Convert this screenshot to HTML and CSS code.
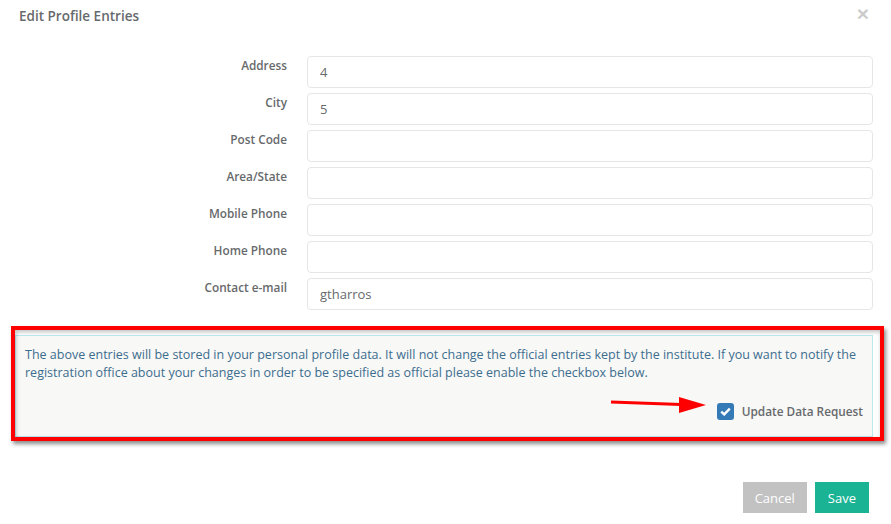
FILE: index.html
```html
<!DOCTYPE html>
<html lang="en">
<head>
    <meta charset="UTF-8">
    <title>Edit Profile Entries</title>
    <link rel="stylesheet" href="styles.css">
</head>
<body>
<div class="modal">
    <div class="modal-header">
        <h4 class="modal-title">Edit Profile Entries</h4>
        <button type="button" class="close">&times;</button>
    </div>
    <div class="modal-body">
        <form class="form-grid">
            <label>Address</label>
            <input type="text" class="form-control" value="4">
            <label>City</label>
            <input type="text" class="form-control" value="5">
            <label>Post Code</label>
            <input type="text" class="form-control" value="">
            <label>Area/State</label>
            <input type="text" class="form-control" value="">
            <label>Mobile Phone</label>
            <input type="text" class="form-control" value="">
            <label>Home Phone</label>
            <input type="text" class="form-control" value="">
            <label>Contact e-mail</label>
            <input type="text" class="form-control" value="gtharros">
        </form>

        <div class="notice-wrap">
            <div class="notice">
                <p>The above entries will be stored in your personal profile data. It will not change the official entries kept by the institute. If you want to notify the registration office about your changes in order to be specified as official please enable the checkbox below.</p>
                <div class="check-row">
                    <span class="check-box">
                        <svg width="11" height="9" viewBox="0 0 11 9"><path d="M1.2 4.6 L4.2 7.4 L9.8 1.6" fill="none" stroke="#fff" stroke-width="2.4"/></svg>
                    </span>
                    <span class="check-label">Update Data Request</span>
                </div>
            </div>
            <!-- annotation -->
            <div class="red-frame"></div>
            <svg class="red-arrow" width="100" height="20" viewBox="0 0 100 20">
                <path d="M2 7 L72 9.5" stroke="#f00" stroke-width="3" fill="none"/>
                <polygon points="70,2 97,10 70,18" fill="#f00"/>
            </svg>
        </div>
    </div>
    <div class="modal-footer">
        <button type="button" class="btn btn-cancel">Cancel</button>
        <button type="button" class="btn btn-save">Save</button>
    </div>
</div>
</body>
</html>
```

FILE: styles.css
```css
*{
    margin: 0;
    padding: 0;
    box-sizing: border-box;
}
body{
    font-family: "Open Sans", "Liberation Sans", sans-serif;
    font-size: 13px;
    color: #676a6c;
    background: #fff;
}
.modal{
    width: 891px;
}
.modal-header{
    display: flex;
    justify-content: space-between;
    align-items: flex-start;
    height: 36px;
    padding: 6px 22px 0 19px;
}
.modal-title{
    font-size: 13.5px;
    font-weight: 600;
    line-height: 21px;
    color: #676a6c;
}
.close{
    border: 0;
    background: none;
    font-family: "Liberation Sans", sans-serif;
    font-size: 21px;
    font-weight: bold;
    line-height: 20px;
    color: #000;
    opacity: 0.2;
    margin-top: -2px;
}
.modal-body{
    padding: 20px 18px 0 0;
}
.form-grid{
    display: grid;
    grid-template-columns: 287px 1fr;
    column-gap: 20px;
    row-gap: 5px;
}
.form-grid label{
    text-align: right;
    font-size: 11.8px;
    font-weight: 600;
    line-height: 18px;
}
.form-control{
    height: 32px;
    border: 1px solid #e5e6e7;
    border-radius: 4px;
    padding: 0 12px;
    font-family: inherit;
    font-size: 13px;
    color: #676a6c;
    outline: none;
}
.notice-wrap{
    position: relative;
    margin: 25px 0 0 15px;
    width: 858px;
}
.notice{
    background: #f8f8f7;
    border: 1px solid #bce8f1;
    padding: 10px 9px 15px 9px;
}
.notice p{
    font-size: 12.5px;
    color: #3c6d8e;
    line-height: 18px;
}
.check-row{
    display: flex;
    justify-content: flex-end;
    align-items: center;
    gap: 8px;
    margin-top: 19px;
    height: 20px;
}
.check-box{
    width: 17px;
    height: 17px;
    border-radius: 3px;
    background: #337ab7;
    display: flex;
    align-items: center;
    justify-content: center;
}
.check-label{
    font-size: 11.8px;
    font-weight: 600;
    color: #676a6c;
}
.red-frame{
    position: absolute;
    left: -4px;
    top: -9px;
    width: 873px;
    height: 115px;
    border: 4px solid #f00;
    box-shadow: 2px 3px 4px rgba(0,0,0,0.45), inset 1px 2px 4px rgba(0,0,0,0.25);
}
.red-arrow{
    position: absolute;
    left: 594px;
    top: 60px;
}
.modal-footer{
    display: flex;
    justify-content: flex-end;
    gap: 8px;
    padding: 45px 22px 0 0;
}
.btn{
    height: 31px;
    border: 0;
    border-radius: 0;
    padding: 0 12px;
    font-family: inherit;
    font-size: 13px;
    color: #fff;
}
.btn-cancel{
    background: #c2c2c2;
}
.btn-save{
    background: #1ab394;
    padding: 0 13px;
}
```
